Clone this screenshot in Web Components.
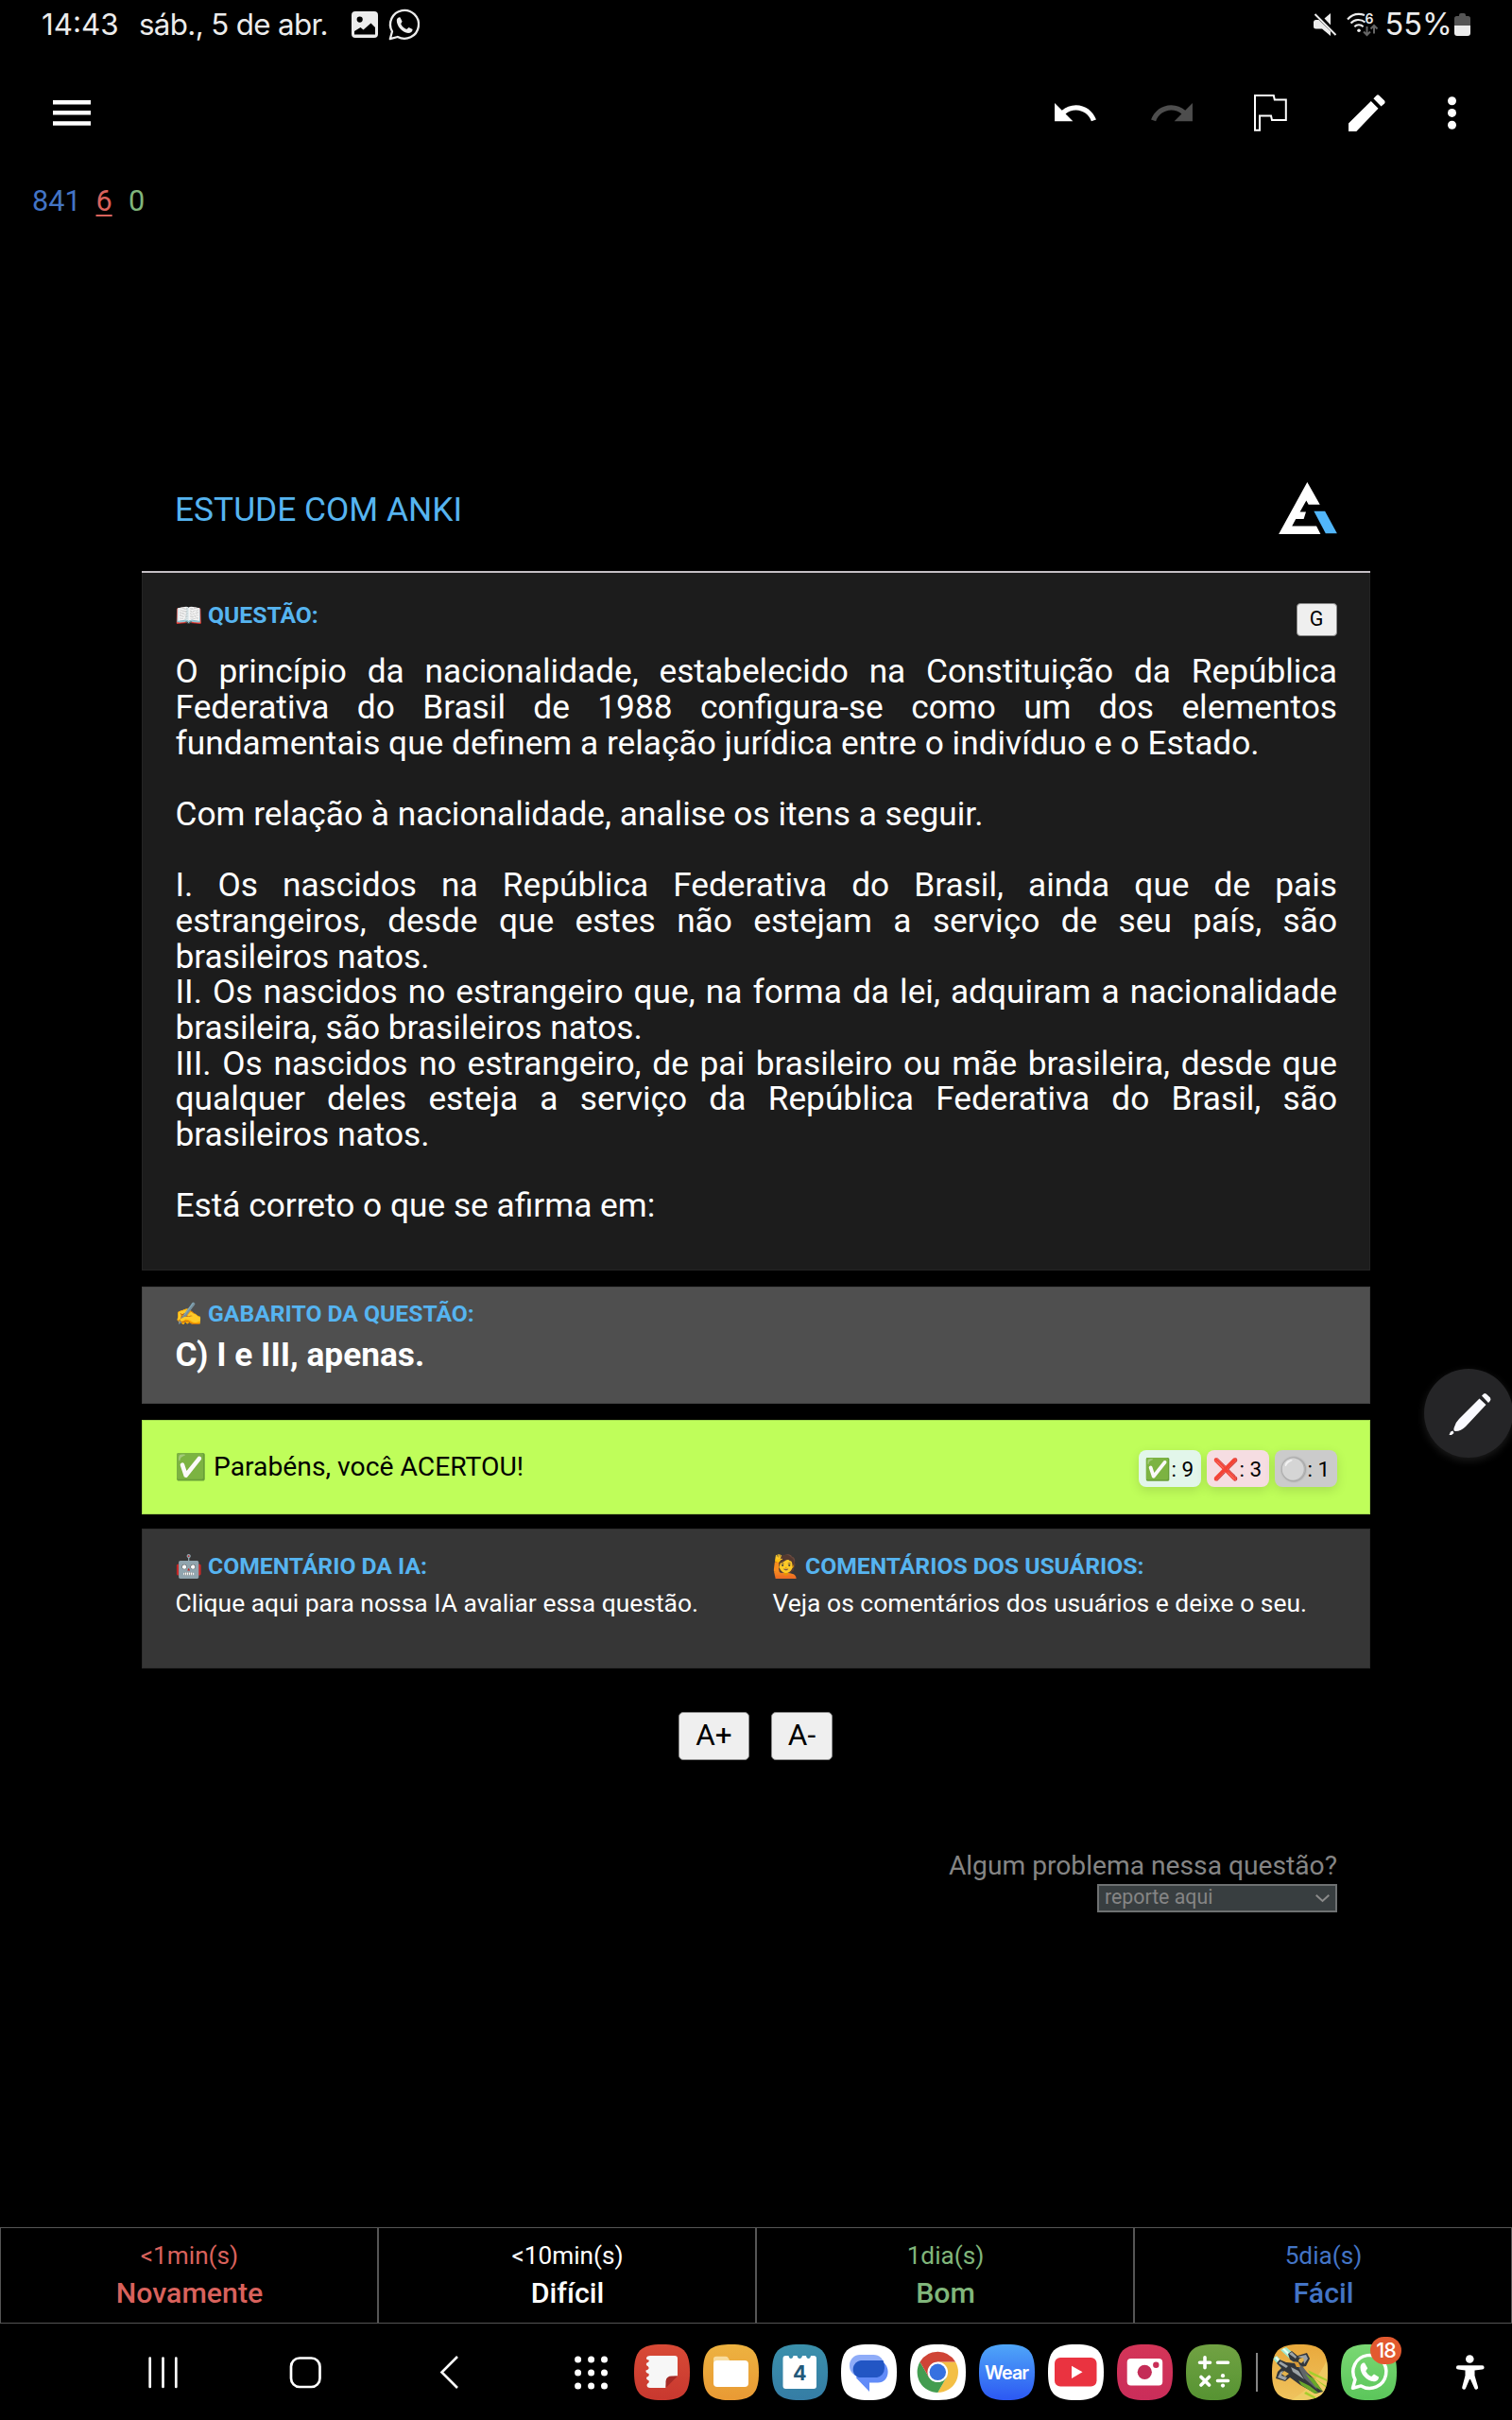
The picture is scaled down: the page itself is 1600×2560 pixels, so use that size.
<!DOCTYPE html>
<html lang="pt-BR">
<head>
<meta charset="utf-8">
<title>AnkiDroid</title>
<style>
html,body{margin:0;background:#000}
body{width:1600px;height:2560px;overflow:hidden;font-family:Roboto,"Noto Sans",sans-serif}
</style>
</head>
<body>
<anki-app></anki-app>
<script>
const define = (name, css, html) => customElements.define(name, class extends HTMLElement {
  constructor() {
    super();
    const t = document.createElement('template');
    t.innerHTML = `<style>*{box-sizing:border-box}svg{display:block;flex:none;overflow:visible}${css}</style>${html}`;
    this.attachShadow({mode: 'open'}).append(t.content.cloneNode(true));
  }
});

define('status-bar', `
:host{display:flex;align-items:center;height:52px;padding-left:44px;font:31.3px/52px Inter,sans-serif;color:#ececec;white-space:nowrap}
.time{width:103px}.date{width:225px;letter-spacing:-.65px}
.wa{margin-left:11px}.mute{margin-left:945px}.wifi{margin-left:11px}
.pct{margin-left:7.5px;width:73.5px;font-size:32.4px}
`, `
<span class="time">14:43</span><span class="date">sáb., 5 de abr.</span>
<svg width="28" height="28" viewBox="0 0 28 28"><path fill="#ececec" fill-rule="evenodd" d="M4 0H24A4 4 0 0 1 28 4V24A4 4 0 0 1 24 28H4A4 4 0 0 1 0 24V4A4 4 0 0 1 4 0ZM8.700 5.500A3.100 3.100 0 1 0 8.700 11.700A3.100 3.100 0 1 0 8.700 5.500ZM3 21V24.500H25V17L20.500 12.500L12.500 19.500L9.500 17Z"/></svg>
<svg class="wa" width="34" height="34" viewBox="0 0 34 34"><path fill="none" stroke="#ececec" stroke-width="2.300" stroke-linejoin="round" d="M1.800 32.200L4 24.300A15 15 0 1 1 9.800 30Z"/><path fill="#ececec" d="M8.800 12C9.500 9.800 11.200 9 12.500 9.500L14.600 13.800L13.200 16.200C14.500 19 16.500 20.800 19.300 21.900L21.600 20L25.600 22C25.600 24.500 23.500 26 21 26C14.500 25.500 8.500 18.500 8.800 12Z"/></svg>
<svg class="mute" width="24" height="26" viewBox="0 0 24 26"><path fill="#ececec" d="M0 10A2.500 2.500 0 0 1 2.500 8H5.500L18 20V25L9 17.500H2.500A2.500 2.500 0 0 1 0 15ZM18 1V13.500L11.500 6.500Z"/><path stroke="#ececec" stroke-width="2" d="M1.500 2L23.500 24"/></svg>
<svg class="wifi" width="33" height="26" viewBox="0 0 33 26"><g fill="none" stroke="#ececec" stroke-width="2.100"><path d="M1 7.500C6 2 13 1 19 3M4.500 11.500C8.500 7.300 15 6.800 19.500 10.500M8.300 15.200C10.800 12.600 15 12.600 17.600 15.200"/></g><circle cx="13" cy="19.300" r="1.800" fill="#ececec"/><text x="19.500" y="12" font-family="Inter" font-weight="600" font-size="14" fill="#ececec">6</text><path fill="none" stroke="#656565" stroke-width="2" d="M21.500 15V23.500M18 20.500L21.500 24L25 20.500M29 22.500V14.500M25.500 17.500L29 14L32.500 17.500"/></svg>
<span class="pct">55%</span>
<svg width="17" height="24" viewBox="0 0 17 24"><path fill="#555" d="M0 5.500A2.500 2.500 0 0 1 2.500 3H5V2A2 2 0 0 1 7 0H10A2 2 0 0 1 12 2V3H14.500A2.500 2.500 0 0 1 17 5.500V13H0Z"/><path fill="#ececec" d="M0 13H17V21A3 3 0 0 1 14 24H3A3 3 0 0 1 0 21Z"/></svg>`);

define('tool-bar', `
:host{display:flex;align-items:center;height:135px;padding-left:56px}
.u{margin-left:1020px;margin-top:-2px}.r{margin-left:58px;margin-top:-2px;transform:scaleX(-1)}.f{margin-left:65px}.p{margin-left:65px}.d{margin-left:66px}
`, `
<svg width="40" height="27" viewBox="0 0 40 27" fill="#fff"><path d="M0 0H40V4.500H0ZM0 11H40V15.500H0ZM0 22.300H40V26.700H0Z"/></svg>
<svg class="u" width="44" height="19.300" viewBox="2 7 20.470 9"><path fill="#fff" d="M12.500 8c-2.650 0-5.050.99-6.900 2.600L2 7v9h9l-3.620-3.620c1.390-1.160 3.160-1.880 5.120-1.880 3.540 0 6.550 2.310 7.600 5.500l2.370-.78C21.080 11.030 17.150 8 12.500 8z"/></svg>
<svg class="r" width="44" height="19.300" viewBox="2 7 20.470 9"><path fill="#4d4d4d" d="M12.500 8c-2.650 0-5.050.99-6.900 2.600L2 7v9h9l-3.620-3.620c1.390-1.160 3.160-1.880 5.120-1.880 3.540 0 6.550 2.310 7.600 5.500l2.370-.78C21.080 11.030 17.150 8 12.500 8z"/></svg>
<svg class="f" width="35" height="39" viewBox="0 0 35 39"><path fill="none" stroke="#fff" stroke-width="2" d="M1 1H20.800L21.800 5.500H33.800V27H19L18 22.600H6V37.800H1Z"/></svg>
<svg class="p" width="39" height="39" viewBox="0 0 39 39"><path fill="#fff" d="M0 39V30.500L23.800 7L31.500 14.800L8.300 39ZM26.400 4.200L29.600 .9Q31 -.3 32.400 .9L38.100 6.600Q39.300 8 38.100 9.400L34.500 12.600Z"/></svg>
<svg class="d" width="9" height="35" viewBox="0 0 9 35" fill="#fff"><circle cx="4.500" cy="4.800" r="4.500"/><circle cx="4.500" cy="17.400" r="4.500"/><circle cx="4.500" cy="30.200" r="4.500"/></svg>`);

define('card-counts', `
:host{display:flex;height:51px;padding-left:34px;font-size:30.6px;line-height:51px}
.n{width:67.5px;color:#4374c5}.l{width:34.5px;color:#d9625c;text-decoration:underline;text-decoration-thickness:1.500px;text-underline-offset:3.500px}.r{color:#80b67b}
`, `<span class="n">841</span><span class="l">6</span><span class="r">0</span>`);

define('deck-header', `
:host{display:flex;align-items:center;justify-content:space-between;height:132px;padding:0 35px 0 35px;border-bottom:2px solid #c4bfc4;color:#56b4f0;font-size:35.350px}
svg{margin-bottom:3px}
`, `<slot></slot>
<svg width="62" height="55" viewBox="0 0 184 164"><path fill="#fff" d="M0 164L90 0L130 71H94L87 58L67 94H86L79 116H54L42 139H119L132 164Z"/><path fill="#51b6fa" d="M111 92H146L184 162H148Z"/></svg>`);

define('section-label', `
:host{display:flex;height:30px;line-height:30px;font-size:24.700px;font-weight:700;color:#56b4f0;white-space:nowrap}
span{font-size:23.600px;width:35.500px;margin-left:-1px;font-weight:400}
`, `<span><slot name="icon"></slot></span><slot></slot>`);

define('grade-button', `
:host{display:flex;align-items:center;justify-content:center;background:#efefef;border:1px solid #8a8a8a;border-radius:4px;color:#000}
`, `<slot></slot>`);

define('question-card', `
:host{display:block;height:738px;padding:30px 35px 0 34.500px;border:1px solid #242424;border-top:0;background:#1c1c1c;color:#fff}
.head{display:flex;justify-content:space-between;height:56.300px;margin-right:-.5px}
grade-button{width:43px;height:35px;margin-top:2px;font-size:21.500px;padding-bottom:2px}
.body{font-size:35.280px;line-height:37.660px;text-align:justify;width:1229.500px}
`, `<div class="head"><section-label><span slot="icon">📖</span>QUESTÃO:</section-label><grade-button>G</grade-button></div>
<div class="body"><slot></slot></div>`);

define('answer-card', `
:host{display:block;height:124px;margin-top:17px;padding:12.500px 35px 0 34.500px;border:1px solid #444;background:#4f4f4f;color:#fff}
b{display:block;font-size:35.250px;line-height:42px;margin-top:7.500px}
`, `<section-label><span slot="icon">✍️</span><slot name="label"></slot></section-label><b><slot></slot></b>`);

define('score-chip', `
:host{display:flex;align-items:center;height:39px;padding-left:6px;border-radius:8px;font-size:22.500px;line-height:30px;color:#000;white-space:nowrap;box-shadow:0 4px 12px rgba(0,0,0,.12)}
.e{width:28.500px;font-size:22.500px}
`, `<span class="e"><slot name="icon"></slot></span><slot></slot>`);

define('result-card', `
:host{display:flex;align-items:center;height:100px;margin-top:16.500px;padding:0 34px 0 34.500px;border:1px solid #a3d94f;background:#bffe5a;color:#000;font-size:28.280px;line-height:36px}
.msg{flex:1;display:flex}.msg span{width:40.500px;font-size:27px;margin-left:-1px;margin-right:1px}
.chips{display:flex;gap:6px;margin-top:4px}
score-chip{width:66px}.ok{background:#e2f6ea}.no{background:#f6dde2}.un{background:#cbcbcb}
.un span{filter:brightness(.95) drop-shadow(0 0 1px #777)}
`, `<div class="msg"><span>✅</span><slot></slot></div>
<div class="chips"><score-chip class="ok"><span slot="icon">✅</span>: 9</score-chip><score-chip class="no"><span slot="icon">❌</span>: 3</score-chip><score-chip class="un"><span slot="icon">⚪</span>: 1</score-chip></div>`);

define('comment-card', `
:host{display:grid;grid-template-columns:632px 1fr;height:148px;margin-top:15.500px;padding:24px 35px 0 34.500px;border:1px solid #2e2e2e;background:#363636;color:#fff;font-size:26.450px}
p{margin:7.500px 0 0;line-height:32px;white-space:nowrap}
`, `<div><section-label><span slot="icon">🤖</span>COMENTÁRIO DA IA:</section-label><p>Clique aqui para nossa IA avaliar essa questão.</p></div>
<div><section-label><span slot="icon">🙋</span>COMENTÁRIOS DOS USUÁRIOS:</section-label><p>Veja os comentários dos usuários e deixe o seu.</p></div>`);

define('font-controls', `
:host{display:flex;justify-content:center;gap:23px;margin-top:46px;padding-right:1px}
grade-button{height:51px;font-size:31.500px;padding-bottom:3px;border-radius:5px}
.a{width:75px}.b{width:65px}
`, `<grade-button class="a">A+</grade-button><grade-button class="b">A-</grade-button>`);

define('report-box', `
:host{display:flex;flex-direction:column;align-items:flex-end;margin:93.500px 35px 0 0;color:#858585;font-size:28.200px;line-height:36px}
.sel{display:flex;align-items:center;justify-content:space-between;width:254px;height:30px;margin-top:1px;padding:0 6px 2px 6px;border:2px solid #6e7172;background:#383e40;font-size:21.300px}
svg{margin-top:3px}
`, `<span>Algum problema nessa questão?</span>
<div class="sel"><span>reporte aqui</span><svg width="15" height="8" viewBox="0 0 15 8"><path fill="none" stroke="#8b8b8b" stroke-width="2" d="M.7 .7L7.500 7L14.300 .7"/></svg></div>`);

define('ease-button', `
:host{display:flex;flex:1;flex-direction:column;align-items:center;height:102px;padding:12px 0 0 1px;border:1px solid #555;font-size:26.200px;line-height:35px}
b{font-weight:500;font-size:30.300px;line-height:40px;margin-top:2px}
`, `<slot name="time"></slot><b><slot></slot></b>`);

define('answer-row', `
:host{display:flex}
.again{color:#d9625c}.hard{color:#fff}.good{color:#80b67b}.easy{color:#4374c5}
`, `<ease-button class="again"><span slot="time">&lt;1min(s)</span>Novamente</ease-button>
<ease-button class="hard"><span slot="time">&lt;10min(s)</span>Difícil</ease-button>
<ease-button class="good"><span slot="time">1dia(s)</span>Bom</ease-button>
<ease-button class="easy"><span slot="time">5dia(s)</span>Fácil</ease-button>`);

customElements.define('app-icon', class extends HTMLElement {
  connectedCallback() {
    const a = this.getAttribute('from'), b = this.getAttribute('to') || a;
    this.attachShadow({mode: 'open'}).innerHTML = `<style>:host{display:block;position:relative;width:59px;height:59px}svg{display:block;overflow:visible}
    .badge{position:absolute;left:31px;top:-8px;width:33px;height:29px;border-radius:15px;background:#e2592f;color:#fff;font:500 21.500px/28px Inter,sans-serif;text-align:center;letter-spacing:-1px}</style>
    <svg width="59" height="59" viewBox="0 0 59 59"><defs><linearGradient id="g" x2="0" y2="1"><stop stop-color="${a}"/><stop offset="1" stop-color="${b}"/></linearGradient>
    <clipPath id="c"><path d="M0 29.500C0 7 7 0 29.500 0S59 7 59 29.500 52 59 29.500 59 0 52 0 29.500Z"/></clipPath></defs>
    <g clip-path="url(#c)"><path fill="url(#g)" d="M0 0H59V59H0Z"/>${ICONS[this.getAttribute('name')]}</g></svg>${this.hasAttribute('badge') ? `<span class="badge">${this.getAttribute('badge')}</span>` : ''}`;
  }
});
const ICONS = {
  notes: `<path fill="#f7f7f7" d="M17 12H43Q46 12 46 15V33.500Q34 33 33.500 46H17Q13.500 46 13.500 43Q13.500 41.500 15.500 40.500Q16.500 38 14 37.500Q12 36 13.500 34.500Q16.500 33.500 15.500 31Q12 30 12.500 27.500Q16 26.500 15.500 24.500Q15 23 13.500 22.500Q12 21 13.500 19.500Q16.500 18.500 15.500 16.500Q12.500 16 13 14Q14 12 17 12Z"/><path fill="#a52a26" d="M46 33.500L33.500 46V39Q34 33.500 40 33.500Z"/>`,
  files: `<path fill="#f8dc9f" d="M11 24V15.500Q11 12.700 14 12.700H24Q26 12.700 27 15L28.500 18Z"/><rect x="11" y="17" width="37" height="28" rx="4" fill="#fff"/>`,
  calendar: `<path fill="#fff" d="M14.500 12H17.500Q18 15 20 15T22.500 12H26.500Q27 15 29.200 15T32 12H36Q36.500 15 38.500 15T41 12H44Q47 12 47 15V44Q47 47 44 47H14.500Q11.500 47 11.500 44V15Q11.500 12 14.500 12Z"/><text x="29.300" y="38" text-anchor="middle" font-family="Inter" font-weight="700" font-size="21.500" fill="#24597a">4</text>`,
  messages: `<rect x="9" y="11" width="36.500" height="23" rx="11" fill="#8facf8"/><path fill="#628cf8" d="M24 17H41C46 19 49.600 23 49.600 29C49.600 36 45 40.500 39 40.500H30V50L16 35.500Z"/><path fill="#2256c4" d="M21 17H44.500Q46 20 46 25Q45.500 33 38 35H19C10.500 33 10 19 21 17Z"/>`,
  chrome: `<g transform="translate(29.300 29.300)"><path fill="#f3bf45" d="M18.800 -10.800A21.700 21.700 0 0 1 0 21.700L9.350 5.400L0 -10.800Z"/><path fill="#439c50" d="M0 21.700A21.700 21.700 0 0 1 -18.800 -10.800L-9.350 5.400L9.350 5.400Z"/><path fill="#cf4436" d="M-18.800 -10.800A21.700 21.700 0 0 1 18.800 -10.800H0L-9.350 5.400Z"/><circle r="10.800" fill="#fff"/><circle r="8.700" fill="#3671e0"/></g>`,
  wear: `<text x="29.500" y="37" text-anchor="middle" font-family="Inter" font-weight="600" font-size="19.600" textLength="47" fill="#fff">Wear</text>`,
  youtube: `<rect x="7" y="14" width="44.500" height="30.500" rx="6" fill="#ea3340"/><path fill="#fff" d="M25 22.700L36.500 29.300L25 36Z"/>`,
  camera: `<rect x="10.700" y="15" width="37.500" height="28.500" rx="4" fill="#fff"/><circle cx="29.300" cy="29.300" r="7.600" fill="#c42c57"/><circle cx="41.300" cy="21.700" r="3.200" fill="#c92e57"/>`,
  calculator: `<path fill="none" stroke="#fff" stroke-width="3.600" stroke-linecap="round" d="M14.500 19.300H25.500M20 13.800V24.800M33.500 19.300H44.500M16 34.500L24.500 43M24.500 34.500L16 43M33.500 38.500H44.500"/><circle cx="39" cy="33.200" r="2.100" fill="#fff"/><circle cx="39" cy="43.600" r="2.100" fill="#fff"/>`,
  game: `<path fill="#f0d26a" d="M20 59Q45 45 59 15V59Z" opacity=".7"/><path fill="#9fe9cf" d="M1 15L5 12L18 26L14 30ZM9 6L15 3L28 14L23 19Z"/><path fill="#e9fff4" d="M3 14L5 13L14 23L12 25ZM11 5L13 4L22 13L20 14Z"/><path fill="#a5cf2c" d="M38 27L58 37V39L40 31ZM36 50L50 58H46L34 52ZM42 34L59 45V47Z"/><path fill="#32363b" d="M17 10L21 7L27 12L37 9L40 15L36 23L31 24L43 35L54 50L46 52L30 43L19 35L14 39L4 36L6 29L10 25L5 20L8 16L15 19L25 20L19 16Z"/><path fill="#9da3a6" d="M18 10L21 8L26 13L25 15ZM27 13L36 11L38 15L34 21L33 15ZM7 20L9 18L17 23L15 25ZM6 35L9 29L12 28L10 33L16 35L14 38ZM20 24L28 28L34 37L22 29Z"/><path fill="#e3b24c" d="M29 15L33 14L34 17L31 20L28 18ZM10 31L13 28L18 31L14 34Z"/><path fill="#60656a" d="M25 18L33 24L44 39L48 48L34 36Z"/><path fill="#d99a35" d="M23 18L28 19L30 24L26 24Z"/><path fill="#69a82a" d="M35 31L44 36L54 50L46 45ZM28 38L40 44L49 51L45 52L31 43Z"/>`,
  whatsapp: `<path fill="none" stroke="#fff" stroke-width="3.500" stroke-linejoin="round" d="M12.500 46.300L15 37.300A17.500 17.500 0 1 1 21.300 43.900Z"/><path fill="#fff" d="M20.500 24C21 20.500 23 19 25 19.600L28.200 25.300L26.200 28.300C27.500 31 29.500 32.800 32.200 34L35 31.500L40 34.500C40 37.500 37.500 39.500 34.500 39.300C27.500 38.500 20.500 32 20.500 24Z"/>`
};

define('nav-bar', `
:host{display:flex;align-items:center;height:102px;padding-left:157px}
.apps{display:flex;gap:14px;margin-left:27px}.home{margin-left:118px}.back{margin-left:126px}.grid{margin-left:122px}
.sep{width:2px;height:41px;margin:0 15px;background:#858585}.acc{margin-left:63px}
`, `
<svg width="31" height="33" viewBox="0 0 31 33"><path stroke="#fff" stroke-width="2.700" stroke-linecap="round" d="M1.700 1.500V32M15.500 1.500V32M29.300 1.500V32"/></svg>
<svg class="home" width="34" height="33" viewBox="0 0 34 33"><rect x="2" y="1.500" width="30.500" height="30.500" rx="9" fill="none" stroke="#fff" stroke-width="2.700"/></svg>
<svg class="back" width="19" height="35" viewBox="0 0 19 35"><path fill="none" stroke="#fff" stroke-width="2.600" d="M18 1L1.500 17.500L18 34"/></svg>
<svg class="grid" width="37" height="37" viewBox="0 0 37 37"><path stroke="#fff" stroke-width="7" stroke-linecap="round" d="M4.600 5h.01M18.600 5h.01M32.500 5h.01M4.600 19h.01M18.600 19h.01M32.500 19h.01M4.600 33h.01M18.600 33h.01M32.500 33h.01"/></svg>
<div class="apps">
<app-icon name="notes" from="#d84a36" to="#c8382f"></app-icon><app-icon name="files" from="#edb240" to="#e99a34"></app-icon><app-icon name="calendar" from="#3b90ab" to="#357da5"></app-icon><app-icon name="messages" from="#fff"></app-icon><app-icon name="chrome" from="#fff"></app-icon><app-icon name="wear" from="#4fa6f8" to="#2c58f3"></app-icon><app-icon name="youtube" from="#fff"></app-icon><app-icon name="camera" from="#d43558" to="#ca2d5a"></app-icon><app-icon name="calculator" from="#71a243" to="#569332"></app-icon>
</div><div class="sep"></div>
<app-icon name="game" from="#e9a93c" to="#efc35e"></app-icon><app-icon style="margin-left:14px" name="whatsapp" from="#7ad873" to="#5bc65b" badge="18"></app-icon>
<svg class="acc" width="30" height="37" viewBox="0 0 30 37"><circle cx="14.300" cy="4.500" r="4.300" fill="#fff"/><path fill="#fff" d="M2 11.300H27.500A1.900 1.900 0 0 1 27.500 15.500L19.500 16.500V22L23 34A1.900 1.900 0 0 1 19.300 35.500L15 26H14L10 35.500A1.900 1.900 0 0 1 6.300 34L9.500 22V16.500L2 15.500A1.900 1.900 0 0 1 2 11.300Z"/></svg>`);

define('pen-fab', `
:host{position:absolute;left:1507px;top:1448px;width:94px;height:94px;border-radius:50%;background:#252527;box-shadow:0 3px 8px #1c1c1c}
`, `<svg width="94" height="94" viewBox="0 0 94 94"><path fill="#fafaff" d="M58.500 31.500L65.500 38L44 61Q38.500 66.500 32.500 66Q30.500 65 32 61.500Q33 57 37 53ZM61 28.500L63 26.500Q64.500 25.500 66 26.800L70 30.500Q71 32.500 69.800 34L68 36ZM28 66.500L30.500 65.500L31.500 68L29 70H26.500Z"/></svg>`);

define('anki-app', `
:host{display:flex;flex-direction:column;position:relative;width:1600px;height:2560px;overflow:hidden;background:#000}
main{width:1300px;margin:236px 150px 0;flex:1}
`, `<status-bar></status-bar><tool-bar></tool-bar><card-counts></card-counts>
<main>
<deck-header>ESTUDE COM ANKI</deck-header>
<question-card>O princípio da nacionalidade, estabelecido na Constituição da República Federativa do Brasil de 1988 configura-se como um dos elementos fundamentais que definem a relação jurídica entre o indivíduo e o Estado.<br><br>Com relação à nacionalidade, analise os itens a seguir.<br><br>I. Os nascidos na República Federativa do Brasil, ainda que de pais estrangeiros, desde que estes não estejam a serviço de seu país, são brasileiros natos.<br>II. Os nascidos no estrangeiro que, na forma da lei, adquiram a nacionalidade brasileira, são brasileiros natos.<br>III. Os nascidos no estrangeiro, de pai brasileiro ou mãe brasileira, desde que qualquer deles esteja a serviço da República Federativa do Brasil, são brasileiros natos.<br><br>Está correto o que se afirma em:</question-card>
<answer-card><span slot="label">GABARITO DA QUESTÃO:</span>C) I e III, apenas.</answer-card>
<result-card>Parabéns, você ACERTOU!</result-card>
<comment-card></comment-card>
<font-controls></font-controls>
<report-box></report-box>
</main>
<answer-row></answer-row><nav-bar></nav-bar><pen-fab></pen-fab>`);
</script>
</body>
</html>
